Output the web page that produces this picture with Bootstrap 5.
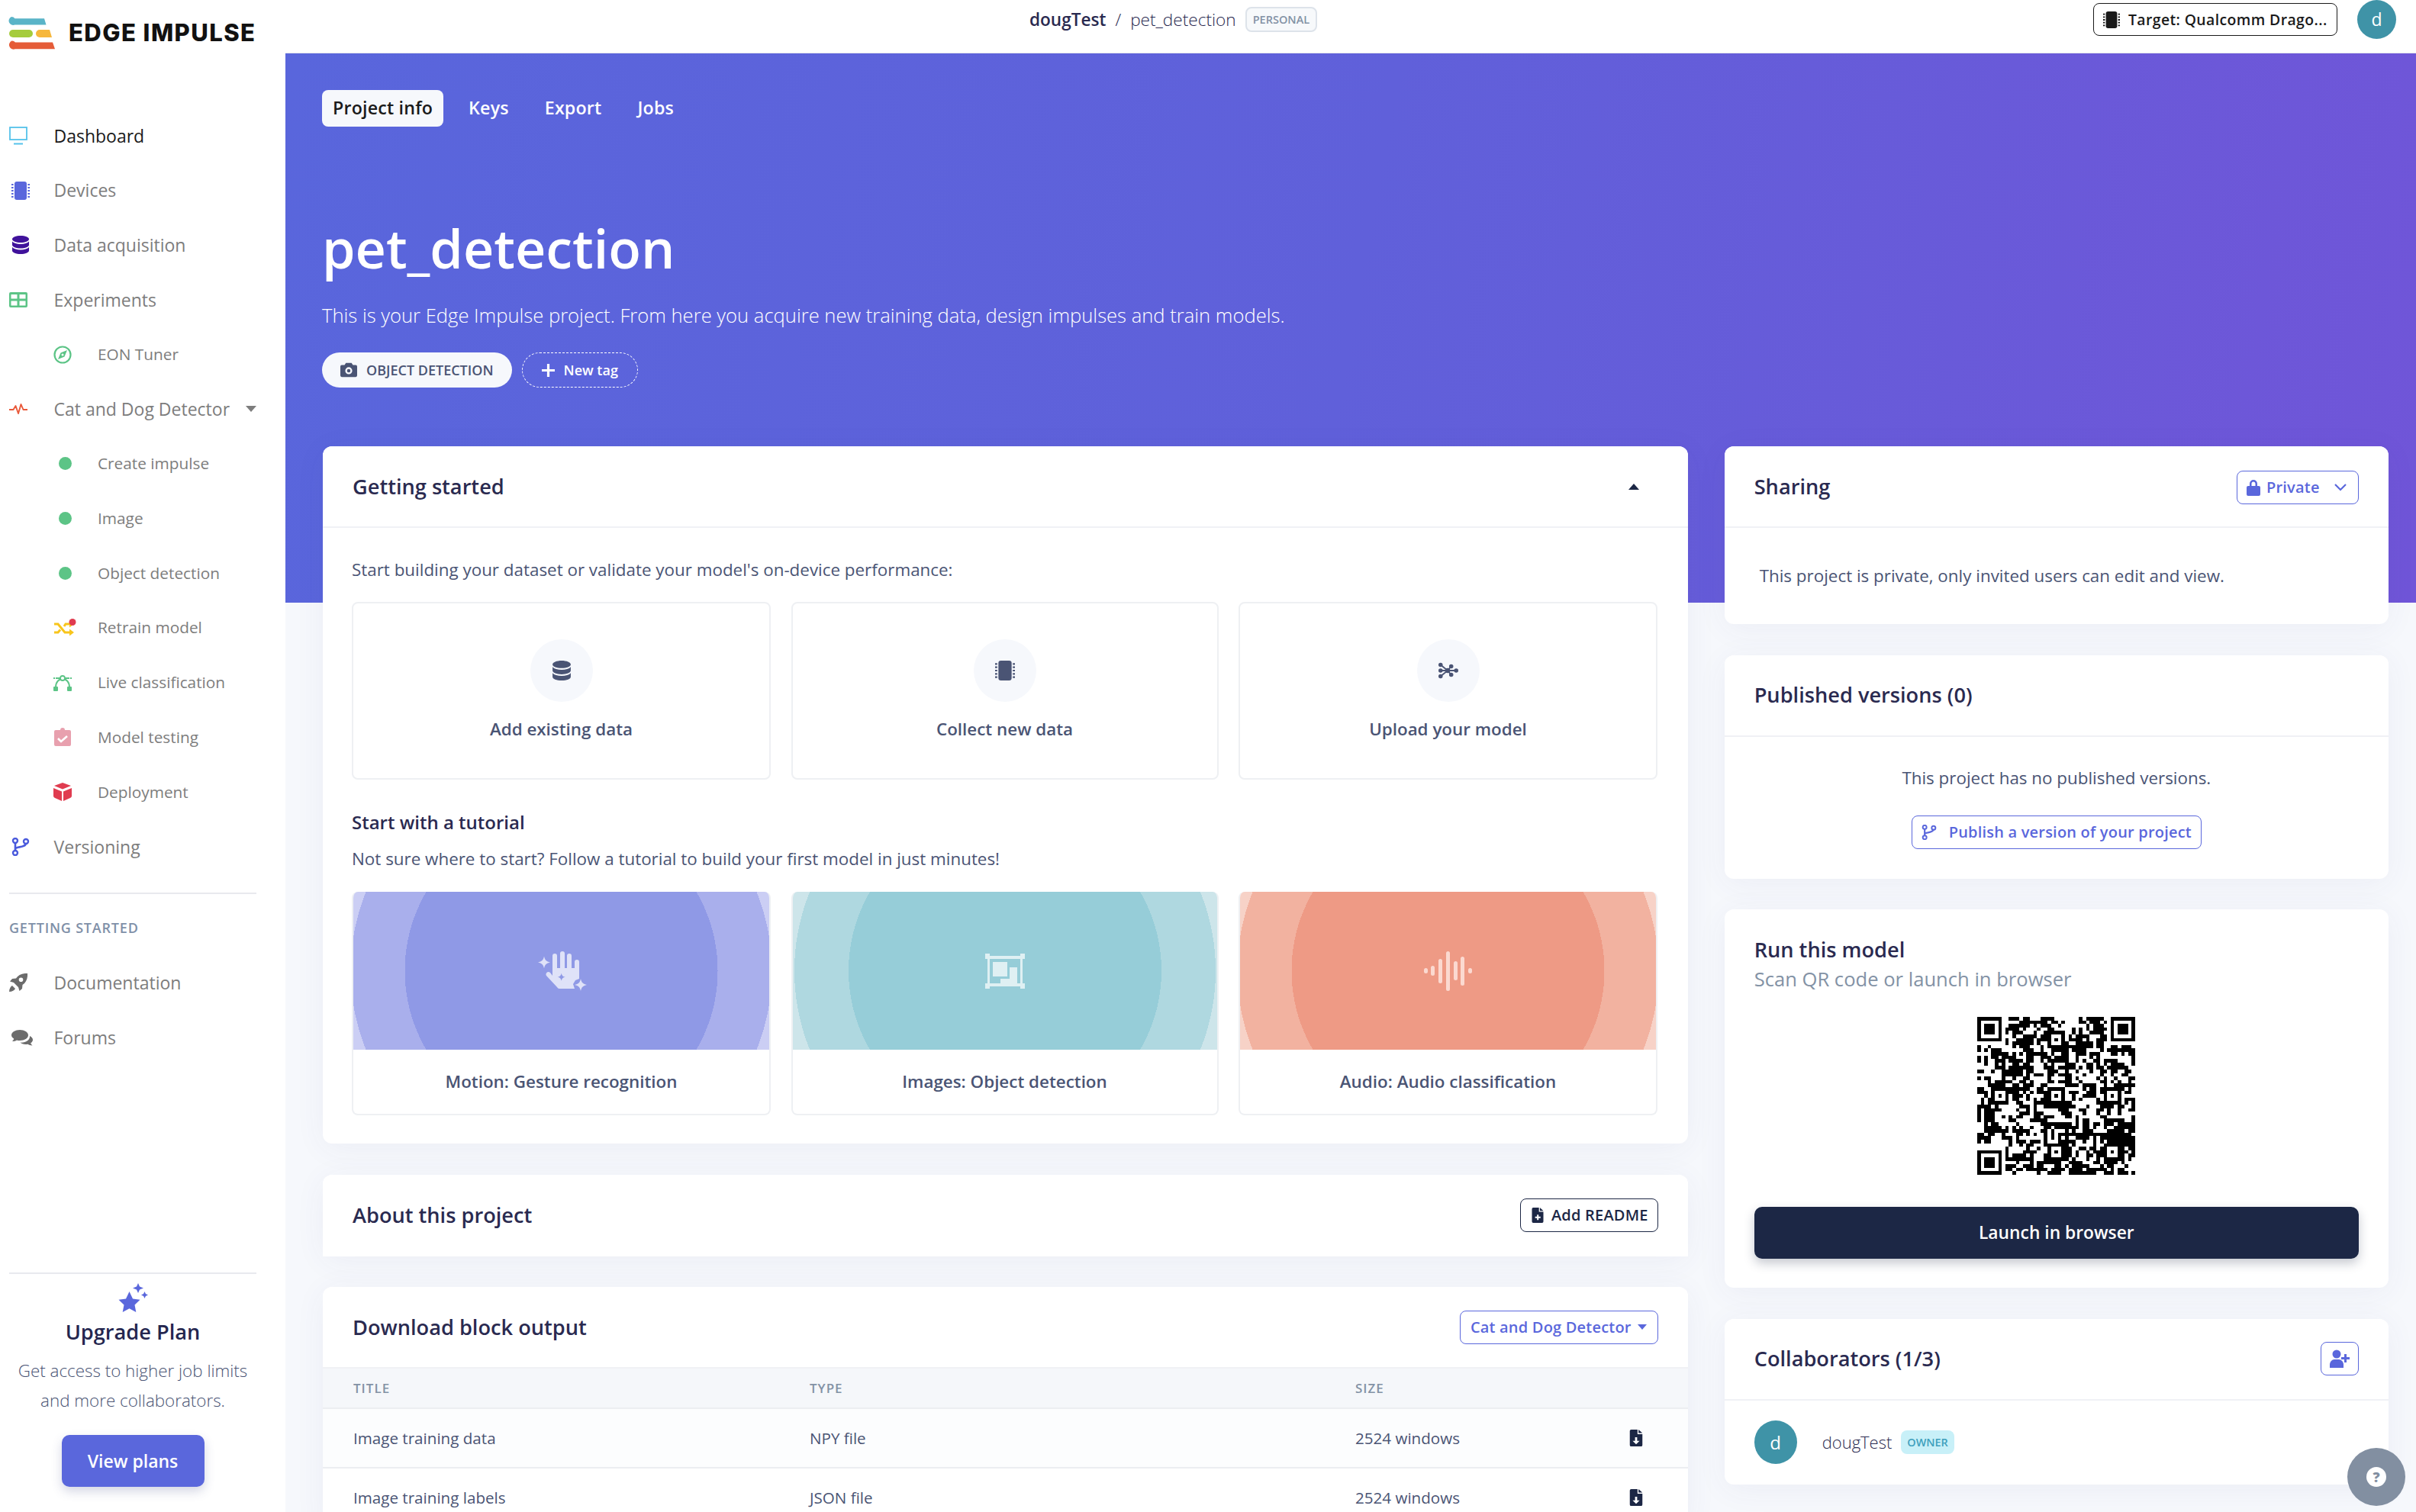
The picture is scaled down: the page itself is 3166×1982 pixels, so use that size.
<!DOCTYPE html>
<html lang="en">
<head>
<meta charset="UTF-8">
<meta name="viewport" content="width=device-width, initial-scale=1">
<link href="https://cdn.jsdelivr.net/npm/bootstrap@5.3.3/dist/css/bootstrap.min.css" rel="stylesheet">
<script src="https://cdn.jsdelivr.net/npm/bootstrap@5.3.3/dist/js/bootstrap.bundle.min.js"></script>
<title>pet_detection - Dashboard - Edge Impulse</title>
<style>
    body { font-family: "Open Sans", "Liberation Sans", sans-serif; background: #f6f8fc; color: #4a5474; height: 100vh; overflow: hidden; }
    .shell { height: 100vh; }

    /* sidebar */
    .side { width: 374px; flex: 0 0 374px; background: #fff; padding: 22px 0 33px; }
    .brand { padding-left: 10px; height: 43px; margin-bottom: 77px; }
    .brand svg { width: 62px; height: 43px; margin-right: 18px; flex-shrink: 0; }
    .brand span { font-family: Inter, "Liberation Sans", sans-serif; font-weight: 800; font-size: 31px; color: #111; letter-spacing: 1.45px; white-space: nowrap; }
    .side-link { height: 71.7px; color: #7d7d7d; font-size: 23px; text-decoration: none; padding-left: 12px; white-space: nowrap; }
    .side-link.on { color: #1a1a1a; }
    .side-ic { width: 58.5px; flex: 0 0 58.5px; }
    .side-ic svg { width: 24px; height: 24px; display: block; }
    .side-ic svg.nudge { margin-left: 3px; }
    .side-link.sub { padding-left: 70px; font-size: 20.8px; }
    .side-link.sub .side-ic { width: 58px; flex: 0 0 58px; }
    .dot { display: block; width: 17px; height: 17px; border-radius: 50%; background: #5cc486; margin-left: 7px; }
    .side-caret { width: 14px; height: 8px; margin-left: 21px; }
    .side-rule { margin: 24px 38px 0 12px; border-top: 2px solid #e8e9ee; opacity: 1; }
    .side-head { font-size: 18px; font-weight: 600; letter-spacing: .8px; color: #7f90a8; padding-left: 12px; margin: 32px 0 25px; line-height: 24px; }
    .upgrade { margin: auto 38px 0 12px; border-top: 2px solid #e8e9ee; text-align: center; padding-top: 12px; }
    .upgrade svg { width: 40px; height: 40px; display: block; margin: 0 auto 4px; }
    .upgrade h5 { font-size: 27.2px; font-weight: 600; color: #24264f; line-height: 40px; margin-bottom: 11px; }
    .upgrade p { font-size: 22.4px; font-weight: 300; color: #4a5474; line-height: 39px; margin: 0 0 26px; }
    .btn-plans { --bs-btn-bg: #5a67dc; --bs-btn-color: #fff; --bs-btn-hover-bg: #4e5bd0; --bs-btn-hover-color: #fff; width: 187px; height: 68px; border-radius: 10px; font-size: 23px; font-weight: 600; box-shadow: 0 6px 14px rgba(60, 70, 130, .22); }

    /* top bar */
    .topbar { height: 70px; background: #fff; border-bottom: 1px solid #e4e6ee; padding: 0 26px 18px 975px; flex: 0 0 70px; }
    .crumbs { font-size: 22.6px; color: #2a2a50; white-space: nowrap; }
    .crumbs b { font-weight: 600; }
    .crumbs i { font-style: normal; font-weight: 300; margin: 0 12px; }
    .crumbs span { font-weight: 300; }
    .tag-personal { font-size: 14.5px; font-weight: 600; color: #8392a5; border: 2px solid #dde3ea; border-radius: 8px; background: #f7f9fb; padding: 0 8px; height: 33px; line-height: 29px; margin-left: 12px; }
    .btn-target { --bs-btn-color: #1a1a1a; --bs-btn-border-color: #1a1a1a; --bs-btn-hover-bg: #fff; --bs-btn-hover-color: #1a1a1a; border-radius: 8px; height: 43px; width: 320px; padding: 0 12px; font-size: 19.4px; font-weight: 600; letter-spacing: .4px; white-space: nowrap; }
    .btn-target svg { width: 22px; height: 22px; margin-right: 11px; flex-shrink: 0; }
    .who { width: 51px; height: 51px; background: #3f93a7; color: #fff; font-size: 23px; flex: 0 0 51px; margin-left: 26px; }

    /* hero */
    .hero { height: 720px; flex: 0 0 720px; padding: 48px 40px 0 48px; background: linear-gradient(100deg, #5966dc 0%, #6060da 50%, #7055d8 100%); color: #fff; }
    .tabs { gap: 19px; }
    .tabs .nav-link { height: 48px; padding: 0 14px; line-height: 46px; font-size: 23.2px; letter-spacing: .2px; font-weight: 600; color: #fff; border-radius: 8px; }
    .tabs .nav-link.active { background: #f6f8fc; color: #1a1a1a; }
    .hero h1 { font-size: 70px; font-weight: 600; line-height: 86px; margin: 116px 0 26px; }
    .hero p { font-size: 25.6px; font-weight: 300; line-height: 40px; margin: 0 0 28px; }
    .pill-type { height: 46px; border-radius: 23px; background: #f6f8fc; color: #4a5474; font-size: 18px; font-weight: 600; padding: 0 24px; }
    .pill-type svg { width: 22px; height: 22px; margin-right: 12px; }
    .pill-new { height: 46px; border-radius: 23px; border: 1px dashed #fff; color: #fff; font-size: 18px; font-weight: 600; padding: 0 25px; margin-left: 13px; }
    .pill-new svg { width: 17px; height: 17px; margin-right: 12px; }

    /* content */
    .content { margin-top: -205px; padding: 0 36px 0 49px; }
    .panel { border: 0; border-radius: 12px; box-shadow: 0 6px 40px rgba(60, 70, 130, .06); margin-bottom: 40.5px; --bs-card-bg: #fff; }
    .panel-top { height: 107px; background: #fff; border-bottom: 2px solid #f0f1f5; padding: 0 39px; border-radius: 12px 12px 0 0 !important; }
    .panel-top.flat { border-bottom: 0; }
    .panel-top h5 { font-size: 27.2px; font-weight: 600; color: #2a2a50; margin: 0; line-height: 40px; }
    .btn-line { --bs-btn-color: #5a67dc; --bs-btn-border-color: #5a67dc; --bs-btn-hover-bg: #fff; --bs-btn-hover-color: #5a67dc; --bs-btn-hover-border-color: #5a67dc; height: 44px; border-radius: 8px; font-size: 20px; letter-spacing: .2px; font-weight: 600; padding: 0 12px; white-space: nowrap; }
    .btn-dk { --bs-btn-color: #1c2745; --bs-btn-border-color: #1c2745; --bs-btn-hover-bg: #fff; --bs-btn-hover-color: #1c2745; height: 44px; border-radius: 8px; font-size: 20px; letter-spacing: .2px; font-weight: 600; padding: 0 12px; white-space: nowrap; }
    .btn-line svg, .btn-dk svg { width: 20px; height: 20px; flex-shrink: 0; }
    .btn-private { width: 160px; margin-top: 3px; }
    .btn-private .lock { width: 18px; height: 22px; }
    .btn-private .chev { width: 16px; height: 10px; margin-right: 3px; }
    .btn-dd { padding: 0 14px 0 13px; }
    .btn-dd svg { width: 12px; height: 7px; }

    .gs-body { padding: 35px 39px 37px 38px; }
    .gs-body p { font-size: 22.4px; line-height: 40px; margin: 0; }
    .tiles { display: grid; grid-template-columns: 549px 560px 549px; gap: 26.5px; }
    .tile { height: 233px; border: 2px solid #eef0f3; border-radius: 8px; background: #fff; text-align: center; padding-top: 47px; margin-top: 22px; }
    .tile-ic { width: 82px; height: 82px; background: #f6f8fc; margin: 0 auto 16px; }
    .tile-ic svg { width: 26px; height: 26px; }
    .tile-t { font-size: 22.4px; font-weight: 600; color: #4a5474; line-height: 40px; }
    .gs-sub { font-size: 24px; font-weight: 600; color: #2a2a50; line-height: 40px; margin: 36px 0 8px; }
    .art-tile { height: 293px; border: 2px solid #eef0f3; border-top: 0; border-radius: 8px; background: #fff; text-align: center; overflow: hidden; margin-top: 23px; }
    .art { height: 207px; }
    .art-blue { background: radial-gradient(circle at center, #8f99e6 205px, #a9afec 205px 276px, #cbcef4 276px); }
    .art-teal { background: radial-gradient(circle at center, #96cdd8 205px, #afd8e0 205px 276px, #cde5ea 276px); }
    .art-red { background: radial-gradient(circle at center, #ee9a85 205px, #f2b2a0 205px 276px, #f7d2c7 276px); }
    .art-t { font-size: 22.4px; font-weight: 600; color: #4a5474; line-height: 84px; }

    .tbl { margin: 0; table-layout: fixed; --bs-table-bg: transparent; }
    .tbl th { height: 52px; padding: 0 0 0 40px; background: #f5f7fa; color: #8392a5; font-size: 17px; font-weight: 600; letter-spacing: 1px; vertical-align: middle; border-bottom: 2px solid #eceef1; }
    .tbl td { height: 78px; padding: 0 0 0 40px; font-size: 20.6px; color: #4a5474; vertical-align: middle; border-bottom: 2px solid #eceef1; }
    .tbl tbody tr:nth-child(odd) td { background: #fcfdfe; }
    .tbl td.td-dl { padding-left: 35px; }
    .tbl svg { width: 18px; height: 22px; display: block; }
    .c-a { width: 598px; } .c-b { width: 715px; } .c-c { width: 364px; }

    .share-txt { padding: 43px 0 43px 46px; font-size: 22.4px; line-height: 40px; }
    .pub-body { padding: 34px 0 39px; text-align: center; font-size: 22.4px; line-height: 40px; }
    .pub-body .btn { margin-top: 29px; }
    .run-body { padding: 33px 39px 38px 39px; }
    .run-body h5 { font-size: 27.2px; font-weight: 600; color: #2a2a50; line-height: 40px; margin: 0; }
    .run-body p { font-size: 25.6px; color: #8392a5; line-height: 38px; margin: 0; }
    .qr { display: block; width: 207px; height: 207px; margin: 30px auto 42px; }
    .btn-launch { --bs-btn-bg: #1c2745; --bs-btn-color: #fff; --bs-btn-hover-bg: #1c2745; --bs-btn-hover-color: #fff; height: 68px; border-radius: 10px; font-size: 22.8px; font-weight: 600; box-shadow: 0 6px 14px rgba(28, 39, 69, .25); }
    .btn-addp { width: 50px; padding: 0; }
    .btn-addp svg { width: 26px; height: 24px; }
    .collab { padding: 26px 39px; height: 110px; }
    .who-lg { width: 56px; height: 57px; background: #3f93a7; color: #fff; font-size: 24px; margin-right: 33px; }
    .collab-n { font-size: 22px; font-weight: 300; color: #2a2a50; }
    .tag-owner { background: #c8f0f8; color: #3fa0bd; font-size: 14.4px; font-weight: 600; height: 31px; line-height: 31px; padding: 0 8px; border-radius: 8px; margin-left: 12px; }
    .help { position: fixed; left: 3076px; top: 1898px; width: 76px; height: 76px; background: #828fa1; }
    .help svg { width: 28px; height: 28px; }
</style>
</head>
<body>
<svg width="0" height="0" class="position-absolute">
    <symbol id="i-chip" viewBox="0 0 24 24"><rect x="4" y="0" width="16" height="24" rx="3"/><path d="M0 3h2.600v2H0zM0 7h2.600v2H0zM0 11h2.600v2H0zM0 15h2.600v2H0zM0 19h2.600v2H0zM21.400 3H24v2h-2.600zM21.400 7H24v2h-2.600zM21.400 11H24v2h-2.600zM21.400 15H24v2h-2.600zM21.400 19H24v2h-2.600z"/></symbol>
    <symbol id="i-db" viewBox="0 0 24 24"><path d="M1 4.500C1 2 6 0 12 0s11 2 11 4.500S18 9 12 9 1 7 1 4.500z"/><path d="M1 7.500C3 9.800 7 11 12 11s9-1.200 11-3.500V12c0 2.500-5 4.500-11 4.500S1 14.500 1 12z"/><path d="M1 15c2 2.300 6 3.500 11 3.500S21 17.300 23 15v4.500C23 22 18 24 12 24S1 22 1 19.500z"/></symbol>
    <symbol id="i-branch" viewBox="0 0 24 24"><path fill="none" stroke="currentColor" stroke-width="2.600" d="M5 6v12M5 15c0-4 14-1 14-8"/><circle cx="5" cy="4" r="3" fill="none" stroke="currentColor" stroke-width="2.400"/><circle cx="5" cy="20" r="3" fill="none" stroke="currentColor" stroke-width="2.400"/><circle cx="19" cy="5" r="3" fill="none" stroke="currentColor" stroke-width="2.400"/></symbol>
    <symbol id="i-caret" viewBox="0 0 14 8"><path d="M0 0h14L7 8z"/></symbol>
    <symbol id="i-file-plus" viewBox="0 0 18 24"><path fill-rule="evenodd" d="M2 0h9v6.500h7V22a2 2 0 0 1-2 2H2a2 2 0 0 1-2-2V2a2 2 0 0 1 2-2zm6 11v3H5v2.600h3v3h2.500v-3h3V14h-3v-3zM12.500 0 18 5h-5.500z"/></symbol>
    <symbol id="i-file-down" viewBox="0 0 18 24"><path fill-rule="evenodd" d="M2 0h9v6.500h7V22a2 2 0 0 1-2 2H2a2 2 0 0 1-2-2V2a2 2 0 0 1 2-2zm5.500 11v5H4l5 5 5-5h-3.500v-5zM12.500 0 18 5h-5.500z"/></symbol>
</svg>

<div class="shell d-flex">
    <!-- Sidebar -->
    <aside class="side d-flex flex-column">
        <div class="brand d-flex align-items-center">
            <svg viewBox="0 0 62 43">
                <path fill="#5ab4c8" d="M5 0a5.500 5.500 0 0 1 4.500 2.300H48l2.500 8.200H9.500A5.500 5.500 0 1 1 5 0z"/>
                <rect x="2" y="17" width="31" height="10" rx="5" fill="#a5cc3c"/>
                <path fill="#f6b73c" d="M42 17h13l3 10H42a5 5 0 0 1 0-10z"/>
                <path fill="#e55c38" d="M5.500 31.500A5.500 5.500 0 0 1 10 33.500h49l3 8.700H10a5.500 5.500 0 1 1-4.500-10.700z"/>
            </svg>
            <span>EDGE IMPULSE</span>
        </div>
        <a class="side-link on d-flex align-items-center" href="#">
            <span class="side-ic"><svg viewBox="0 0 24 24" fill="none" stroke="#55c2ea" stroke-width="1.800"><rect x="1" y="1" width="22" height="16"/><path d="M6 22.500h12" stroke-width="2"/></svg></span>Dashboard
        </a>
        <a class="side-link d-flex align-items-center" href="#"><span class="side-ic"><svg class="nudge" fill="#5a67dc"><use href="#i-chip"/></svg></span>Devices</a>
        <a class="side-link d-flex align-items-center" href="#"><span class="side-ic"><svg class="nudge" fill="#40129b"><use href="#i-db"/></svg></span>Data acquisition</a>
        <a class="side-link d-flex align-items-center" href="#">
            <span class="side-ic"><svg viewBox="0 0 24 24" fill="#5cc486"><path fill-rule="evenodd" d="M2 2h20a2 2 0 0 1 2 2v16a2 2 0 0 1-2 2H2a2 2 0 0 1-2-2V4a2 2 0 0 1 2-2zm.500 3v5.500h8V5zm11 0v5.500h8V5zm-11 8.500v6h8v-6zm11 0v6h8v-6z"/></svg></span>Experiments
        </a>
        <a class="side-link sub d-flex align-items-center" href="#">
            <span class="side-ic"><svg viewBox="0 0 24 24" fill="none" stroke="#5cc486" stroke-width="2.200"><circle cx="12" cy="12" r="10.500"/><path fill="#5cc486" stroke="none" d="M18 6l-3.500 8.500L6 18l3.500-8.500zM12 10.500a1.500 1.500 0 1 0 0 3 1.500 1.500 0 0 0 0-3z" fill-rule="evenodd"/></svg></span>EON Tuner
        </a>
        <a class="side-link d-flex align-items-center" href="#">
            <span class="side-ic"><svg viewBox="0 0 24 24" fill="none" stroke="#e9593a" stroke-width="1.900" stroke-linejoin="round"><path d="M0 13h5.500l3-5 3.500 10 3.500-12 3 7h5.500"/></svg></span>Cat and Dog Detector<svg class="side-caret" fill="#7d7d7d"><use href="#i-caret"/></svg>
        </a>
        <a class="side-link sub d-flex align-items-center" href="#"><span class="side-ic"><i class="dot"></i></span>Create impulse</a>
        <a class="side-link sub d-flex align-items-center" href="#"><span class="side-ic"><i class="dot"></i></span>Image</a>
        <a class="side-link sub d-flex align-items-center" href="#"><span class="side-ic"><i class="dot"></i></span>Object detection</a>
        <a class="side-link sub d-flex align-items-center" href="#">
            <span class="side-ic"><svg viewBox="0 0 30 24" style="width:30px" fill="none" stroke="#f8c51c" stroke-width="3"><path d="M1 7h5l9 11h7M1 18h5l3-3.500M14 10l2-3h6"/><path fill="#f8c51c" stroke="none" d="M21 13.500l6 4.500-6 4.500zM21 2.500l6 4.500-6 4.500z"/><circle cx="25" cy="4.500" r="4.500" fill="#e03c50" stroke="none"/></svg></span>Retrain model
        </a>
        <a class="side-link sub d-flex align-items-center" href="#">
            <span class="side-ic"><svg viewBox="0 0 24 24" fill="#5cc486"><path fill="none" stroke="#5cc486" stroke-width="2" d="M3 18C3 11 7 7 12 7s9 4 9 11"/><circle cx="12" cy="6" r="3" fill="#fff" stroke="#5cc486" stroke-width="1.800"/><rect x="0" y="17" width="6" height="6" rx="1"/><rect x="18" y="17" width="6" height="6" rx="1"/><path d="M0 5h2v2H0zM3 5h6v2H3zM15 5h6v2h-6zM22 5h2v2h-2z"/></svg></span>Live classification
        </a>
        <a class="side-link sub d-flex align-items-center" href="#">
            <span class="side-ic"><svg viewBox="0 0 24 24" fill="#e8a0ae"><path d="M3 3h6a3 3 0 0 1 6 0h6a2 2 0 0 1 2 2v17a2 2 0 0 1-2 2H3a2 2 0 0 1-2-2V5a2 2 0 0 1 2-2z"/><path fill="none" stroke="#fff" stroke-width="2.600" d="M6 14l4 4 8-7"/></svg></span>Model testing
        </a>
        <a class="side-link sub d-flex align-items-center" href="#">
            <span class="side-ic"><svg viewBox="0 0 24 24" fill="#e03c50"><path d="M12 0l11 4-11 4.500L1 4z"/><path d="M0 7l11 4.500V24L2 20a3 3 0 0 1-2-3zM24 7l-11 4.500V24l9-4a3 3 0 0 0 2-3z"/></svg></span>Deployment
        </a>
        <a class="side-link d-flex align-items-center" href="#"><span class="side-ic" style="color:#4a5adc"><svg class="nudge"><use href="#i-branch"/></svg></span>Versioning</a>
        <hr class="side-rule">
        <div class="side-head">GETTING STARTED</div>
        <a class="side-link d-flex align-items-center" href="#">
            <span class="side-ic"><svg viewBox="0 0 24 24" fill="#6c6c6c"><path fill-rule="evenodd" d="M24 0c-7-.5-12 2-15 6.500L4 7 1 10.500l5 1.500 6 6 1.500 5 3.500-3 .5-5C22 12 24.500 7 24 0zM15.500 11a2.800 2.800 0 1 1 0-5.600 2.800 2.800 0 0 1 0 5.600z"/><path d="M4 16c-2 1-4 4-4 8 4 0 7-2 8-4z"/></svg></span>Documentation
        </a>
        <a class="side-link d-flex align-items-center" href="#">
            <span class="side-ic"><svg class="nudge" viewBox="0 0 28 24" style="width:28px" fill="#6c6c6c"><path d="M11 2c6 0 11 3 11 7s-5 7-11 7c-1.500 0-3-.2-4-.6C5.500 16.500 3.500 17 1 17c1.500-1.200 2-2.400 2.200-3.500C1.200 12.300 0 10.700 0 9c0-4 5-7 11-7z"/><path d="M24 10c2.500 1 4 3 4 5 0 1.700-1 3.200-2.800 4.300.2 1 .8 2 2.300 3.200-2.500 0-4.500-.6-6-1.700-1 .2-2 .3-3 .3-3 0-5.500-1-7-2.500 7 .5 13-3 12.500-8.600z"/></svg></span>Forums
        </a>
        <div class="upgrade">
            <svg viewBox="0 0 40 40" fill="#5a67dc"><path d="M15.500 11l4.500 9.500 9.500 1.300-7 6.700 1.800 9.500-8.800-4.800-8.800 4.800 1.800-9.500-7-6.700 9.500-1.300z"/><path d="M27 0l2 4.500 5 2-5 2-2 4.500-2-4.500-5-2 5-2zM35.500 11l1.400 3.100 3.100 1.400-3.100 1.400-1.400 3.100-1.400-3.100-3.100-1.400 3.100-1.400z"/></svg>
            <h5>Upgrade Plan</h5>
            <p>Get access to higher job limits<br>and more collaborators.</p>
            <button class="btn btn-plans" type="button">View plans</button>
        </div>
    </aside>

    <!-- Main -->
    <main class="flex-grow-1 d-flex flex-column overflow-hidden">
        <div class="topbar d-flex align-items-center">
            <div class="crumbs d-flex align-items-center"><b>dougTest</b><i>/</i><span>pet_detection</span><em class="tag-personal fst-normal">PERSONAL</em></div>
            <div class="ms-auto d-flex align-items-center">
                <button class="btn btn-target d-flex align-items-center" type="button"><svg fill="#1a1a1a"><use href="#i-chip"/></svg>Target: Qualcomm Drago...</button>
                <div class="who rounded-circle d-flex align-items-center justify-content-center">d</div>
            </div>
        </div>

        <section class="hero">
            <ul class="nav tabs">
                <li class="nav-item"><a class="nav-link active" href="#">Project info</a></li>
                <li class="nav-item"><a class="nav-link" href="#">Keys</a></li>
                <li class="nav-item"><a class="nav-link" href="#">Export</a></li>
                <li class="nav-item"><a class="nav-link" href="#">Jobs</a></li>
            </ul>
            <h1>pet_detection</h1>
            <p>This is your Edge Impulse project. From here you acquire new training data, design impulses and train models.</p>
            <div class="d-flex">
                <div class="pill-type d-flex align-items-center"><svg viewBox="0 0 24 24" fill="#4a5474"><path fill-rule="evenodd" d="M8 2h8l2 3h4a2 2 0 0 1 2 2v13a2 2 0 0 1-2 2H2a2 2 0 0 1-2-2V7a2 2 0 0 1 2-2h4zm4 6a5 5 0 1 0 0 10 5 5 0 0 0 0-10zm0 2.500a2.500 2.500 0 1 1 0 5 2.500 2.500 0 0 1 0-5z"/></svg>OBJECT DETECTION</div>
                <div class="pill-new d-flex align-items-center"><svg viewBox="0 0 16 16" fill="#fff"><path d="M6.500 0h3v6.500H16v3H9.500V16h-3V9.500H0v-3h6.500z"/></svg>New tag</div>
            </div>
        </section>

        <div class="content">
            <div class="row gx-5">
                <div class="col-8">
                    <div class="card panel">
                        <div class="card-header panel-top d-flex align-items-center justify-content-between">
                            <h5>Getting started</h5>
                            <svg width="14" height="8" fill="#1c2745" style="margin-right:25px;transform:rotate(180deg)"><use href="#i-caret"/></svg>
                        </div>
                        <div class="gs-body">
                            <p>Start building your dataset or validate your model's on-device performance:</p>
                            <div class="tiles">
                                <div class="tile"><div class="tile-ic rounded-circle d-flex align-items-center justify-content-center"><svg fill="#4a5474"><use href="#i-db"/></svg></div><div class="tile-t">Add existing data</div></div>
                                <div class="tile"><div class="tile-ic rounded-circle d-flex align-items-center justify-content-center"><svg fill="#4a5474"><use href="#i-chip"/></svg></div><div class="tile-t">Collect new data</div></div>
                                <div class="tile"><div class="tile-ic rounded-circle d-flex align-items-center justify-content-center"><svg viewBox="0 0 28 24" fill="#4a5474" stroke="#4a5474" stroke-width="2"><path fill="none" d="M3 4l10 8-10 8M3 12h22M13 12l5-6M13 12l5 6"/><circle cx="3" cy="4" r="2"/><circle cx="3" cy="12" r="2"/><circle cx="3" cy="20" r="2"/><circle cx="13" cy="12" r="2.500"/><circle cx="25" cy="12" r="2"/><circle cx="18" cy="6" r="2"/><circle cx="18" cy="18" r="2"/></svg></div><div class="tile-t">Upload your model</div></div>
                            </div>
                            <div class="gs-sub">Start with a tutorial</div>
                            <p>Not sure where to start? Follow a tutorial to build your first model in just minutes!</p>
                            <div class="tiles">
                                <div class="art-tile">
                                    <div class="art art-blue d-flex align-items-center justify-content-center">
                                        <svg width="100" height="80" viewBox="0 0 100 80" fill="#dfe2f8"><path d="M38 46V20a3 3 0 0 1 6 0v16h4V17a3 3 0 0 1 6 0v19h3V20a3 3 0 0 1 6 0v16h4v-8a3 3 0 0 1 6 0v22l-5 2-3 5 1 3 1 3H47a4 4 0 0 1-3-2L30 46c-2-3 2-7 5-4z"/><path d="M27 20.500c1 5 3 7 8 8-5 1-7 3-8 8-1-5-3-7-8-8 5-1 7-3 8-8zM75 50c1 5 3 7 8 8-5 1-7 3-8 8-1-5-3-7-8-8 5-1 7-3 8-8z"/><path fill="#8f99e6" d="M49.700 42.700c.6 3 2 4.400 5 5-3 .6-4.400 2-5 5-.6-3-2-4.400-5-5 3-.6 4.400-2 5-5z"/></svg>
                                    </div>
                                    <div class="art-t">Motion: Gesture recognition</div>
                                </div>
                                <div class="art-tile">
                                    <div class="art art-teal d-flex align-items-center justify-content-center">
                                        <svg width="52" height="46" viewBox="0 0 52 46" fill="#dff0f3"><path fill-rule="evenodd" d="M0 0h6v3h40V0h6v7h-3v32h3v7h-6v-3H6v3H0v-7h3V7H0zm6 7v32h40V7z"/><path d="M10 11h19v19H10z"/><path d="M32 18h10v21H20v-6h12z"/></svg>
                                    </div>
                                    <div class="art-t">Images: Object detection</div>
                                </div>
                                <div class="art-tile">
                                    <div class="art art-red d-flex align-items-center justify-content-center">
                                        <svg width="63" height="52" viewBox="0 0 63 52" fill="#fbd9d0"><rect x="0" y="22" width="5" height="7" rx="2.500"/><rect x="9" y="19" width="5" height="13" rx="2.500"/><rect x="19" y="10" width="5" height="32" rx="2.500"/><rect x="29" y="0" width="5" height="52" rx="2.500"/><rect x="39" y="13" width="5" height="25" rx="2.500"/><rect x="48" y="7" width="5" height="38" rx="2.500"/><rect x="58" y="22" width="5" height="7" rx="2.500"/></svg>
                                    </div>
                                    <div class="art-t">Audio: Audio classification</div>
                                </div>
                            </div>
                        </div>
                    </div>

                    <div class="card panel">
                        <div class="card-header panel-top flat d-flex align-items-center justify-content-between">
                            <h5>About this project</h5>
                            <button class="btn btn-dk d-flex align-items-center gap-2" type="button"><svg fill="#1c2745"><use href="#i-file-plus"/></svg>Add README</button>
                        </div>
                    </div>

                    <div class="card panel">
                        <div class="card-header panel-top d-flex align-items-center justify-content-between">
                            <h5>Download block output</h5>
                            <button class="btn btn-line btn-dd d-flex align-items-center gap-2" type="button">Cat and Dog Detector<svg fill="#5a67dc"><use href="#i-caret"/></svg></button>
                        </div>
                        <table class="table tbl">
                            <thead><tr><th class="c-a">TITLE</th><th class="c-b">TYPE</th><th class="c-c">SIZE</th><th></th></tr></thead>
                            <tbody>
                                <tr><td>Image training data</td><td>NPY file</td><td>2524 windows</td><td class="td-dl"><svg fill="#1c2745"><use href="#i-file-down"/></svg></td></tr>
                                <tr><td>Image training labels</td><td>JSON file</td><td>2524 windows</td><td class="td-dl"><svg fill="#1c2745"><use href="#i-file-down"/></svg></td></tr>
                            </tbody>
                        </table>
                    </div>
                </div>

                <div class="col-4">
                    <div class="card panel">
                        <div class="card-header panel-top d-flex align-items-center justify-content-between">
                            <h5>Sharing</h5>
                            <button class="btn btn-line btn-private d-flex align-items-center gap-2" type="button"><svg class="lock" viewBox="0 0 18 22" fill="#5a67dc"><path d="M4 9V6a5 5 0 0 1 10 0v3h2a2 2 0 0 1 2 2v9a2 2 0 0 1-2 2H2a2 2 0 0 1-2-2v-9a2 2 0 0 1 2-2zm2.500 0h5V6a2.500 2.500 0 0 0-5 0z"/></svg><span>Private</span><svg viewBox="0 0 16 10" fill="none" stroke="#5a67dc" stroke-width="2.200" class="chev ms-auto"><path d="M1 1l7 7 7-7"/></svg></button>
                        </div>
                        <div class="share-txt">This project is private, only invited users can edit and view.</div>
                    </div>

                    <div class="card panel">
                        <div class="card-header panel-top d-flex align-items-center"><h5>Published versions (0)</h5></div>
                        <div class="pub-body">
                            <div>This project has no published versions.</div>
                            <button class="btn btn-line d-inline-flex align-items-center gap-3" type="button"><svg><use href="#i-branch"/></svg>Publish a version of your project</button>
                        </div>
                    </div>

                    <div class="card panel">
                        <div class="run-body">
                            <h5>Run this model</h5>
                            <p>Scan QR code or launch in browser</p>
                            <svg class="qr" id="qr" viewBox="0 0 45 45" shape-rendering="crispEdges"></svg>
                            <button class="btn btn-launch w-100" type="button">Launch in browser</button>
                        </div>
                    </div>

                    <div class="card panel">
                        <div class="card-header panel-top d-flex align-items-center justify-content-between">
                            <h5>Collaborators (1/3)</h5>
                            <button class="btn btn-line btn-addp d-flex align-items-center justify-content-center" type="button"><svg viewBox="0 0 26 24" fill="#5a67dc"><circle cx="9" cy="6" r="5.500"/><path d="M0 24v-4c0-4 3-7 6-7h6c3 0 6 3 6 7v4z"/><path d="M19 6h3v4h4v3h-4v4h-3v-4h-4v-3h4z"/></svg></button>
                        </div>
                        <div class="collab d-flex align-items-center">
                            <div class="who-lg rounded-circle d-flex align-items-center justify-content-center">d</div>
                            <span class="collab-n">dougTest</span>
                            <span class="tag-owner">OWNER</span>
                        </div>
                    </div>
                </div>
            </div>
        </div>
    </main>
</div>

<div class="help rounded-circle d-flex align-items-center justify-content-center">
    <svg viewBox="0 0 28 28"><circle cx="14" cy="14" r="13" fill="#fff"/><text x="14" y="20.500" text-anchor="middle" font-family="Open Sans" font-weight="800" font-size="18" fill="#828fa1">?</text></svg>
</div>

<script>
    // QR code: finder and alignment patterns are fixed, data modules are seeded so the picture stays the same
    function drawQr() {
        const size = 45;
        const cells = [];
        let seed = 20240611;
        function next() {
            seed = (seed * 1664525 + 1013904223) >>> 0;
            return (seed >>> 16) / 65536;
        }
        for (let y = 0; y < size; y++) {
            cells[y] = [];
            for (let x = 0; x < size; x++) {
                // clumps, like the real data area
                let near = (x > 0 ? cells[y][x - 1] : 0) + (y > 0 ? cells[y - 1][x] : 0);
                cells[y][x] = next() < 0.38 + near * 0.14 ? 1 : 0;
            }
        }
        function clear(x0, y0, w, h) {
            for (let y = y0; y < y0 + h; y++) {
                for (let x = x0; x < x0 + w; x++) {
                    if (cells[y] && x >= 0 && x < size) cells[y][x] = 0;
                }
            }
        }
        function finder(x0, y0) {
            clear(x0 - 1, y0 - 1, 9, 9);
            for (let y = 0; y < 7; y++) {
                for (let x = 0; x < 7; x++) {
                    if (x === 0 || y === 0 || x === 6 || y === 6 || (x > 1 && x < 5 && y > 1 && y < 5)) cells[y0 + y][x0 + x] = 1;
                }
            }
        }
        function align(cx, cy) {
            clear(cx - 2, cy - 2, 5, 5);
            for (let y = -2; y <= 2; y++) {
                for (let x = -2; x <= 2; x++) {
                    if (Math.abs(x) === 2 || Math.abs(y) === 2 || (x === 0 && y === 0)) cells[cy + y][cx + x] = 1;
                }
            }
        }
        finder(0, 0);
        finder(38, 0);
        finder(0, 38);
        [[22, 6], [6, 22], [22, 22], [38, 22], [22, 38], [38, 38]].forEach(p => align(p[0], p[1]));

        let d = '';
        cells.forEach((row, y) => row.forEach((on, x) => {
            if (on) d += 'M' + x + ' ' + y + 'h1v1h-1z';
        }));
        document.getElementById('qr').innerHTML = '<path d="' + d + '" fill="#000"/>';
    }
    drawQr();
</script>
</body>
</html>
